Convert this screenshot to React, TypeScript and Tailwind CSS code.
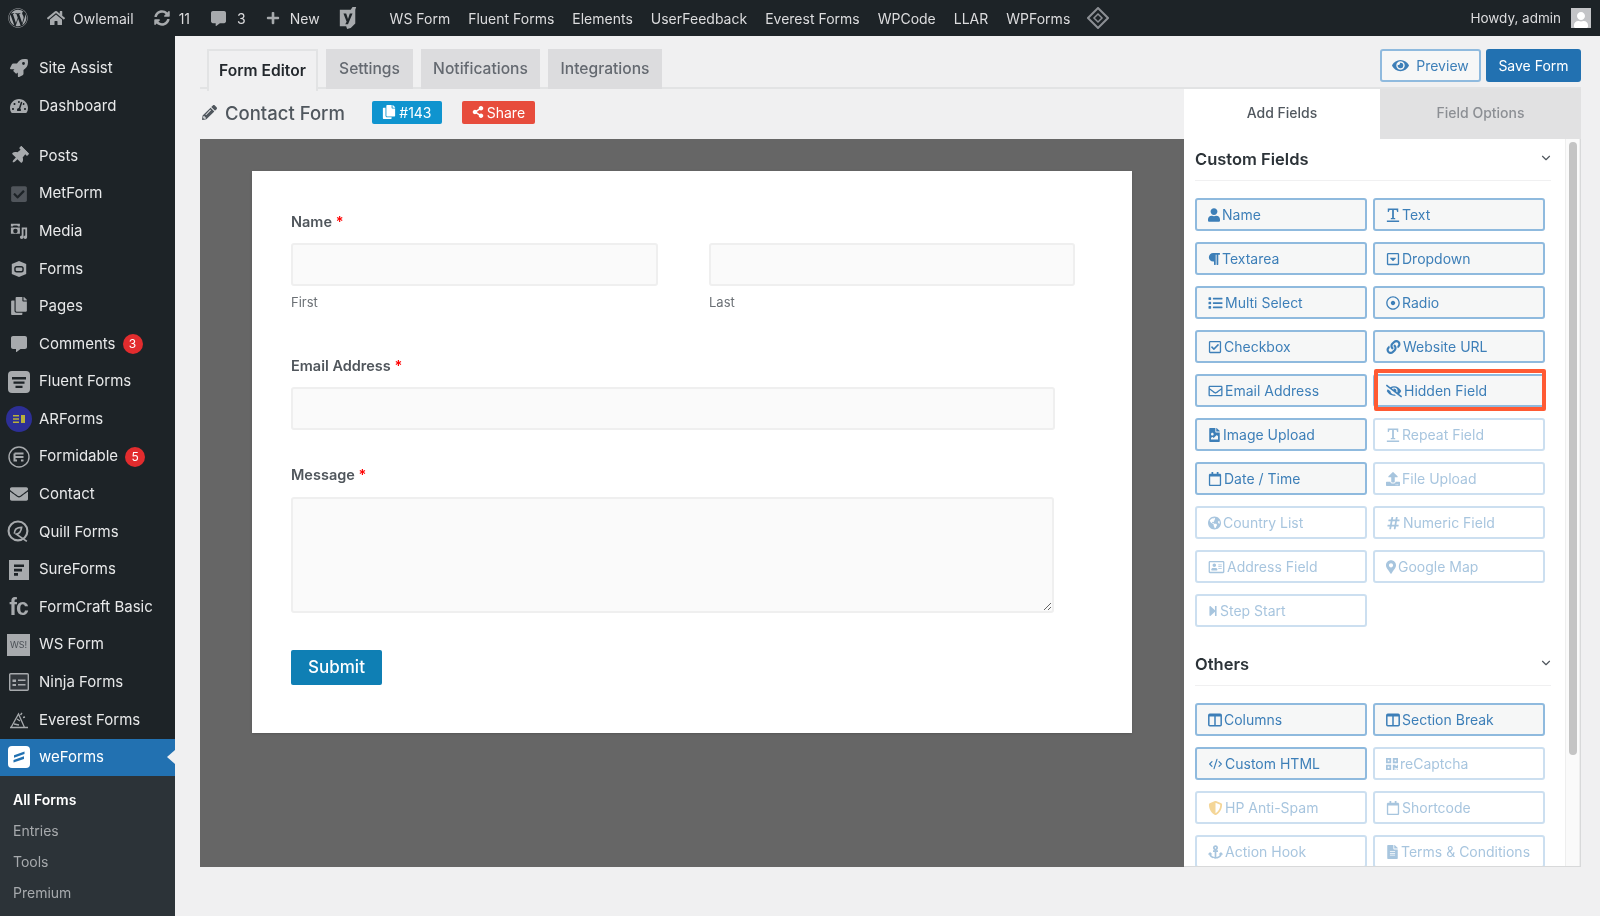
import type { ComponentType, ReactNode } from 'react';
import { ChevronDown, CodeXml } from 'lucide-react';
import {
  FaAnchor, FaCheckSquare, FaCommentAlt, FaCopy, FaEnvelope, FaEye, FaEyeSlash, FaFileAlt,
  FaFileImage, FaGlobeAmericas, FaHashtag, FaHome, FaLink, FaList, FaMapMarkerAlt, FaParagraph, FaPencilAlt,
  FaPlus, FaQrcode, FaRegAddressCard, FaRegCalendar, FaRegCaretSquareDown, FaRegCheckSquare, FaRegDotCircle,
  FaRegEnvelope, FaRocket, FaShareAlt, FaShieldAlt, FaStepForward, FaSyncAlt, FaTachometerAlt,
  FaThumbtack, FaUpload, FaUser, FaWordpress,
} from 'react-icons/fa';

type IconType = ComponentType<{ className?: string }>;

function MediaIcon({ className }: { className?: string }) {
  return (
    <svg viewBox="0 0 20 20" fill="currentColor" className={className}>
      <path d="M1 2h10v3H9L8 4H4L3 5H1V2zM1 6h10v7H1V6zm5 1.5a2.5 2.5 0 1 0 0 5 2.5 2.5 0 0 0 0-5zM13 6h6v11a2 2 0 1 1-2-2V8h-2v9a2 2 0 1 1-2-2V6z" />
    </svg>
  );
}

function FormsIcon({ className }: { className?: string }) {
  return (
    <svg viewBox="0 0 20 20" className={className}>
      <path d="M10 1l8 3.5v11L10 19l-8-3.5v-11z" fill="currentColor" />
      <rect x="5.5" y="7.5" width="9" height="5.5" rx="2" fill="none" stroke="#1d2327" strokeWidth="1.6" />
    </svg>
  );
}

function FluentIcon({ className }: { className?: string }) {
  return (
    <svg viewBox="0 0 22 22" className={className}>
      <rect x="0" y="0" width="22" height="22" rx="4" fill="currentColor" />
      <path d="M4 6h14v2.4H4zM5.5 10.5h11v2.2h-11zM7.5 14.7h7v2.2h-7z" fill="#1d2327" />
    </svg>
  );
}

function ArIcon({ className }: { className?: string }) {
  return (
    <svg viewBox="0 0 26 26" className={className}>
      <circle cx="13" cy="13" r="13" fill="#2d2f96" />
      <path d="M7 9h6v1.6H7zM7 12.2h6v1.6H7zM7 15.4h6v1.6H7zM15 9h4v8h-4z" fill="#b9b13a" />
    </svg>
  );
}

function FormidableIcon({ className }: { className?: string }) {
  return (
    <svg viewBox="0 0 22 22" fill="none" stroke="currentColor" className={className}>
      <circle cx="11" cy="11" r="10" strokeWidth="1.4" />
      <path d="M6.5 7.5h9M6.5 11h9M6.5 14.5h2.5M6.5 7.5v8M13 14.5h2.5" strokeWidth="2" />
    </svg>
  );
}

function QuillIcon({ className }: { className?: string }) {
  return (
    <svg viewBox="0 0 22 22" fill="none" stroke="currentColor" className={className}>
      <circle cx="10.5" cy="10.5" r="9" strokeWidth="2" />
      <path d="M7 13c0-4 3-6 7-6-.5 3.5-2 6-5 6.5l10 7" strokeWidth="1.6" />
    </svg>
  );
}

function SureIcon({ className }: { className?: string }) {
  return (
    <svg viewBox="0 0 20 20" className={className}>
      <rect width="20" height="20" fill="currentColor" />
      <path d="M5 4.5h10v2.6H5zM5 8.8h8v2.6H5zM5 13h4v2.8H5z" fill="#1d2327" />
    </svg>
  );
}

function NinjaIcon({ className }: { className?: string }) {
  return (
    <svg viewBox="0 0 20 18" className={className}>
      <rect x="0.7" y="0.7" width="18.6" height="16.6" rx="1" fill="#32373c" stroke="currentColor" strokeWidth="1.4" />
      <path d="M3.5 6.5H7V9H3.5zM9 6.5h7.5V8H9zM3.5 11H7v2H3.5zM9 11h7.5v1.5H9z" fill="currentColor" />
    </svg>
  );
}

function EverestIcon({ className }: { className?: string }) {
  return (
    <svg viewBox="0 0 20 18" fill="none" stroke="currentColor" className={className}>
      <path d="M1 16.5h18M2 16.5L9.5 3l6 13.5" strokeWidth="1.3" />
      <path d="M8 8l3 2M13 2l-1.5 2M16 6l-2 .5M5 13l5 1" strokeWidth="1.3" />
    </svg>
  );
}

function WeFormsIcon({ className }: { className?: string }) {
  return (
    <svg viewBox="0 0 22 22" className={className}>
      <rect width="22" height="22" rx="4" fill="#fff" />
      <path d="M6 9.2L16.5 5.5v2.6L6 11.8zM5.5 14L16 10.3v2.6L5.5 16.6z" fill="#2271b1" />
    </svg>
  );
}

function YoastIcon({ className }: { className?: string }) {
  return (
    <svg viewBox="0 0 22 24" className={className}>
      <path d="M2 3h12l2-3h4l-1 3v15l-5 5-4 1-1-3H2z" fill="currentColor" />
      <path d="M6 7h3l2 6 2-6h3l-5 12H8l1.5-3z" fill="#1d2327" />
    </svg>
  );
}

function TextIcon({ className }: { className?: string }) {
  return (
    <svg viewBox="0 0 16 14" fill="currentColor" preserveAspectRatio="none" className={className}>
      <path d="M2 0.5h12V4h-1.2L12 2H9v8h1.5v1.2h-5V10H7V2H4L3.2 4H2zM1 12.5h14V14H1z" />
    </svg>
  );
}

function ColumnsIcon({ className }: { className?: string }) {
  return (
    <svg viewBox="0 0 14 14" fill="none" stroke="currentColor" className={className}>
      <rect x="0.8" y="1.2" width="12.4" height="11.6" rx="1" strokeWidth="1.5" />
      <path d="M7 1.5v11" strokeWidth="1.5" />
      <path d="M1 2.5h12" strokeWidth="2" />
    </svg>
  );
}

const WsIcon = () => (
  <span className="flex h-[22px] w-[23px] items-center justify-center bg-[#a7aaad] text-[9px] text-[#4b5056]">WS!</span>
);

const FcIcon = () => (
  <span className="font-[family-name:'Liberation_Sans',sans-serif] text-[23px] font-bold leading-none tracking-[-1px] text-[#a7aaad]">fc</span>
);

type MenuItem = { label: string; icon: ReactNode; badge?: string };

const iconClass = 'h-[18px] w-[18px] text-[#a7aaad]';

const topMenu: MenuItem[] = [
  { label: 'Site Assist', icon: <FaRocket className={iconClass} /> },
  { label: 'Dashboard', icon: <FaTachometerAlt className={iconClass} /> },
];

const mainMenu: MenuItem[] = [
  { label: 'Posts', icon: <FaThumbtack className={`${iconClass} rotate-45`} /> },
  { label: 'MetForm', icon: <FaCheckSquare className="h-[18px] w-[18px] text-[#50555b]" /> },
  { label: 'Media', icon: <MediaIcon className={iconClass} /> },
  { label: 'Forms', icon: <FormsIcon className={iconClass} /> },
  { label: 'Pages', icon: <FaCopy className={iconClass} /> },
  { label: 'Comments', icon: <FaCommentAlt className="h-[16px] w-[16px] text-[#a7aaad]" />, badge: '3' },
  { label: 'Fluent Forms', icon: <FluentIcon className="h-[22px] w-[22px] text-[#a7aaad]" /> },
  { label: 'ARForms', icon: <ArIcon className="h-[26px] w-[26px]" /> },
  { label: 'Formidable', icon: <FormidableIcon className="h-[22px] w-[22px] text-[#a7aaad]" />, badge: '5' },
  { label: 'Contact', icon: <FaEnvelope className={iconClass} /> },
  { label: 'Quill Forms', icon: <QuillIcon className="h-[23px] w-[23px] text-[#a7aaad]" /> },
  { label: 'SureForms', icon: <SureIcon className="h-5 w-5 text-[#a7aaad]" /> },
  { label: 'FormCraft Basic', icon: <FcIcon /> },
  { label: 'WS Form', icon: <WsIcon /> },
  { label: 'Ninja Forms', icon: <NinjaIcon className="h-[18px] w-5 text-[#a7aaad]" /> },
  { label: 'Everest Forms', icon: <EverestIcon className="h-[18px] w-5 text-[#a7aaad]" /> },
];

const topLinks = ['WS Form', 'Fluent Forms', 'Elements', 'UserFeedback', 'Everest Forms', 'WPCode', 'LLAR', 'WPForms'];

type Field = { label: string; icon: IconType; iconW: string; off?: boolean; hot?: boolean };

const customFields: Field[] = [
  { label: 'Name', icon: FaUser, iconW: 'w-[12px]' },
  { label: 'Text', icon: TextIcon, iconW: 'w-[14px]' },
  { label: 'Textarea', icon: FaParagraph, iconW: 'w-[12px]' },
  { label: 'Dropdown', icon: FaRegCaretSquareDown, iconW: 'w-[14px]' },
  { label: 'Multi Select', icon: FaList, iconW: 'w-[15px]' },
  { label: 'Radio', icon: FaRegDotCircle, iconW: 'w-[14px]' },
  { label: 'Checkbox', icon: FaRegCheckSquare, iconW: 'w-[14px]' },
  { label: 'Website URL', icon: FaLink, iconW: 'w-[15px]' },
  { label: 'Email Address', icon: FaRegEnvelope, iconW: 'w-[15px]' },
  { label: 'Hidden Field', icon: FaEyeSlash, iconW: 'w-[16px]', hot: true },
  { label: 'Image Upload', icon: FaFileImage, iconW: 'w-[13px]' },
  { label: 'Repeat Field', icon: TextIcon, iconW: 'w-[14px]', off: true },
  { label: 'Date / Time', icon: FaRegCalendar, iconW: 'w-[14px]' },
  { label: 'File Upload', icon: FaUpload, iconW: 'w-[14px]', off: true },
  { label: 'Country List', icon: FaGlobeAmericas, iconW: 'w-[13px]', off: true },
  { label: 'Numeric Field', icon: FaHashtag, iconW: 'w-[15px]', off: true },
  { label: 'Address Field', icon: FaRegAddressCard, iconW: 'w-[17px]', off: true },
  { label: 'Google Map', icon: FaMapMarkerAlt, iconW: 'w-[10px]', off: true },
  { label: 'Step Start', icon: FaStepForward, iconW: 'w-[10px]', off: true },
];

const otherFields: Field[] = [
  { label: 'Columns', icon: ColumnsIcon, iconW: 'w-[14px]' },
  { label: 'Section Break', icon: ColumnsIcon, iconW: 'w-[14px]' },
  { label: 'Custom HTML', icon: CodeXml, iconW: 'w-[15px]' },
  { label: 'reCaptcha', icon: FaQrcode, iconW: 'w-[12px]', off: true },
  { label: 'HP Anti-Spam', icon: FaShieldAlt, iconW: 'w-[15px]', off: true },
  { label: 'Shortcode', icon: FaRegCalendar, iconW: 'w-[14px]', off: true },
  { label: 'Action Hook', icon: FaAnchor, iconW: 'w-[15px]', off: true },
  { label: 'Terms & Conditions', icon: FaFileAlt, iconW: 'w-[13px]', off: true },
];

function SideRow({ item }: { item: MenuItem }) {
  return (
    <div className="flex h-[37.6px] items-center text-[15px] text-[#e8e9ea]">
      <span className="flex w-[39px] shrink-0 items-center justify-center pr-0.5">{item.icon}</span>
      <span>{item.label}</span>
      {item.badge && (
        <span className="ml-[7px] flex h-5 w-5 items-center justify-center rounded-full bg-[#e22c2e] text-[12px] text-white">
          {item.badge}
        </span>
      )}
    </div>
  );
}

function FieldButton({ field }: { field: Field }) {
  const Icon = field.icon;
  return (
    <div className="relative">
      <div
        className={`flex h-[33px] items-center gap-[2px] rounded-[3px] border-2 border-[#8fbade] pl-[11px] text-[14px] text-[#3d7fb8] ${
          field.off ? 'bg-white opacity-45' : 'bg-[#f6f7f7]'
        }`}
      >
        <Icon className={`h-[14px] shrink-0 ${field.iconW} ${field.label === 'HP Anti-Spam' ? 'text-[#e8a51c]' : ''}`} />
        <span className="whitespace-nowrap">{field.label}</span>
      </div>
      {field.hot && (
        <div className="absolute -top-[5px] -right-px -bottom-[4px] left-px rounded-[2px] border-4 border-[#ff5a33]" />
      )}
    </div>
  );
}

function FieldGroup({ title, fields }: { title: string; fields: Field[] }) {
  return (
    <div className="w-[356px]">
      <div className="flex h-[34px] items-start justify-between border-b border-[#f0f0f1]">
        <span className="text-[16.5px] leading-6 font-semibold text-[#2c3338]">{title}</span>
        <ChevronDown className="mt-[4px] -mr-[2px] h-[14px] w-[14px] text-[#50575e]" />
      </div>
      <div className="mt-[17px] grid w-[350px] grid-cols-2 gap-x-[6px] gap-y-[11px]">
        {fields.map((field) => (
          <FieldButton key={field.label} field={field} />
        ))}
      </div>
    </div>
  );
}

function FormInput({ className }: { className: string }) {
  return <input className={`block h-[43px] rounded-[3px] border-2 border-[#efefef] bg-[#fafafa] ${className}`} />;
}

function FieldLabel({ text, className }: { text: string; className: string }) {
  return (
    <div className={`text-[14.5px] leading-5 font-semibold text-[#50565c] ${className}`}>
      {text} <span className="text-[#ff0000]">*</span>
    </div>
  );
}

export default function App() {
  return (
    <div className="flex h-screen w-full flex-col overflow-hidden bg-[#f0f0f1] font-[family-name:Inter,sans-serif] blur-[0.5px]">
      {/* Admin bar */}
      <div className="flex h-9 shrink-0 items-center bg-[#1d2327] text-[14px] text-[#dcdcde]">
        <FaWordpress className="ml-[8px] h-5 w-5 text-[#a7aaad]" />
        <FaHome className="ml-[19px] h-[18px] w-[18px] text-[#a7aaad]" />
        <span className="ml-[8px]">Owlemail</span>
        <FaSyncAlt className="ml-[20px] h-[16px] w-[16px] text-[#a7aaad]" />
        <span className="ml-[9px]">11</span>
        <FaCommentAlt className="ml-[21px] h-[15px] w-[15px] text-[#a7aaad]" />
        <span className="ml-[11px]">3</span>
        <FaPlus className="ml-[20px] h-[14px] w-[14px] text-[#a7aaad]" />
        <span className="ml-[10px]">New</span>
        <YoastIcon className="ml-[18px] h-[22px] w-5 text-[#a7aaad]" />
        <div className="ml-[32px] flex gap-[18px]">
          {topLinks.map((link) => (
            <span key={link}>{link}</span>
          ))}
        </div>
        <svg viewBox="0 0 22 22" className="ml-[17px] h-[22px] w-[22px]" fill="none" stroke="#8c8f94">
          <path d="M11 1l10 10-10 10L1 11z" strokeWidth="2" />
          <path d="M11 7l4 4-4 4-4-4z" strokeWidth="1.5" />
        </svg>
        <span className="ml-auto text-[13.5px]">Howdy, admin</span>
        <span className="mr-[9px] ml-[10px] flex h-5 w-5 items-end justify-center overflow-hidden bg-[#c3c4c7]">
          <FaUser className="h-4 w-4 text-white" />
        </span>
      </div>

      <div className="flex min-h-0 flex-1">
        {/* Sidebar */}
        <aside className="flex w-[175px] shrink-0 flex-col bg-[#1d2327]">
          <div className="pt-[13.5px]">
            {topMenu.map((item) => (
              <SideRow key={item.label} item={item} />
            ))}
          </div>
          <div className="pt-[12.5px]">
            {mainMenu.map((item) => (
              <SideRow key={item.label} item={item} />
            ))}
          </div>
          <div className="relative flex h-[37px] items-center bg-[#2271b1] text-[15px] text-white">
            <span className="flex w-[39px] items-center justify-center pr-0.5">
              <WeFormsIcon className="h-[22px] w-[22px]" />
            </span>
            weForms
            <span className="absolute top-[11px] right-0 h-0 w-0 border-y-[7px] border-r-[8px] border-y-transparent border-r-[#f0f0f1]" />
          </div>
          <div className="flex-1 bg-[#2c3338] pt-[8.5px] pl-[13px] text-[14px] text-[#a7aaad]">
            <div className="flex h-[31px] items-center font-semibold text-white">All Forms</div>
            <div className="flex h-[31px] items-center">Entries</div>
            <div className="flex h-[31px] items-center">Tools</div>
            <div className="flex h-[31px] items-center">Premium</div>
          </div>
        </aside>

        {/* Main */}
        <main className="flex min-w-0 flex-1 flex-col pr-[19px] pl-[25px]">
          <div className="flex h-[53px] shrink-0 items-start justify-between border-b-2 border-[#e2e3e4] pt-[13px] pl-[7px]">
            <div className="flex h-10 gap-[8px] text-[15.6px] font-medium text-[#646970]">
              <div className="-mb-[2px] flex h-[42px] w-[111px] items-center justify-center border-x-2 border-t-2 border-[#e2e3e4] bg-[#f0f0f1] font-semibold text-[#23282d]">
                Form Editor
              </div>
              <div className="flex w-[87px] items-center justify-center bg-[#dcdcde]">Settings</div>
              <div className="flex w-[119px] items-center justify-center bg-[#dcdcde]">Notifications</div>
              <div className="flex w-[114px] items-center justify-center bg-[#dcdcde]">Integrations</div>
            </div>
            <div className="flex gap-[5px] text-[14px]">
              <div className="flex h-[33px] w-[101px] items-center justify-center gap-[5px] rounded-[3px] border-2 border-[#8fbade] bg-[#f6f7f7] pr-0.5 text-[#3d7fb8]">
                <FaEye className="h-[15px] w-[21px]" />
                Preview
              </div>
              <div className="flex h-[33px] w-[95px] items-center justify-center rounded-[3px] bg-[#2271b1] text-white">Save Form</div>
            </div>
          </div>

          <div className="flex h-[778px] shrink-0">
            {/* Form column */}
            <div className="flex w-[984px] shrink-0 flex-col">
              <div className="flex h-[50px] shrink-0 items-center">
                <FaPencilAlt className="mb-1 ml-[2px] h-[15px] w-[15px] text-[#50575e]" />
                <span className="ml-[8px] text-[18.5px] font-medium text-[#50575e]">Contact Form</span>
                <span className="mb-[4px] ml-[27px] flex h-[23px] w-[70px] items-center justify-center gap-[3px] rounded-[2px] bg-[#0f94cf] text-[14px] text-white">
                  <FaCopy className="h-[14px] w-[14px]" />
                  #143
                </span>
                <span className="mb-[4px] ml-[20px] flex h-[23px] w-[73px] items-center justify-center gap-[3px] rounded-[2px] bg-[#e74c3c] text-[14px] text-white">
                  <FaShareAlt className="h-3 w-3" />
                  Share
                </span>
              </div>
              <div className="flex-1 bg-[#666666] pt-[32px] pl-[52px]">
                <div className="h-[562px] w-[880px] bg-white pt-[41px] pl-[39px] shadow-sm">
                  <FieldLabel text="Name" className="mb-[11px]" />
                  <div className="flex">
                    <div>
                      <FormInput className="w-[367px]" />
                      <div className="mt-[6px] text-[13px] leading-5 text-[#6b7075]">First</div>
                    </div>
                    <div className="ml-[51px]">
                      <FormInput className="w-[366px]" />
                      <div className="mt-[6px] text-[13px] leading-5 text-[#6b7075]">Last</div>
                    </div>
                  </div>
                  <FieldLabel text="Email Address" className="mt-[44px] mb-[11px]" />
                  <FormInput className="w-[764px]" />
                  <FieldLabel text="Message" className="mt-[35px] mb-[12px]" />
                  <textarea className="block h-[116px] w-[763px] rounded-[3px] border-2 border-[#efefef] bg-[#fafafa]" />
                  <div className="mt-[37px] flex h-[35px] w-[91px] items-center justify-center rounded-[2px] bg-[#0f7fb4] text-[17px] font-medium text-white">
                    Submit
                  </div>
                </div>
              </div>
            </div>

            {/* Fields panel */}
            <div className="flex min-w-0 flex-1 flex-col">
              <div className="flex h-[50px] shrink-0 text-[14px]">
                <div className="flex w-[196px] items-center justify-center bg-white pb-[3px] font-medium text-[#50575e]">Add Fields</div>
                <div className="flex flex-1 items-center justify-center bg-[#e1e1e2] pb-[3px] font-medium text-[#8c8f94]">Field Options</div>
              </div>
              <div className="relative min-h-0 flex-1 overflow-hidden border-r border-b border-[#d8d9da] bg-white pt-[8px] pl-[11px]">
                <FieldGroup title="Custom Fields" fields={customFields} />
                <div className="h-[25px]" />
                <FieldGroup title="Others" fields={otherFields} />
                <div className="absolute top-0 right-0 bottom-0 w-[15px] border-x border-[#eeeeee] bg-[#fafafa]" />
                <div className="absolute top-[3px] right-[3px] h-[613px] w-[8px] rounded-full bg-[#c4c4c4]" />
              </div>
            </div>
          </div>
        </main>
      </div>
    </div>
  );
}
